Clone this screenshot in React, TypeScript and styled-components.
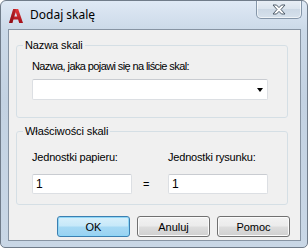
import React from 'react';
import styled, { createGlobalStyle } from 'styled-components';

const GlobalStyle = createGlobalStyle`
  html, body {
    margin: 0;
    padding: 0;
    background: #ffffff;
  }
`;

const Window = styled.div`
  width: 308px;
  height: 248px;
  box-sizing: border-box;
  border: 1px solid #707c8a;
  border-radius: 6px 6px 5px 5px;
  background: linear-gradient(180deg, #dfe9f5 0%, #cbd9e8 12%, #c3d2e2 40%, #c9d7e6 100%);
  display: flex;
  flex-direction: column;
  overflow: hidden;
  font-family: "Liberation Sans", Arial, sans-serif;
`;

const TitleBar = styled.div`
  height: 28px;
  display: flex;
  align-items: flex-start;
`;

const AppIcon = styled.svg`
  width: 16px;
  height: 16px;
  margin: 7px 0 0 7px;
`;

const Title = styled.div`
  margin: 6px 0 0 6px;
  font-family: "Noto Sans", "Open Sans", sans-serif;
  font-size: 12px;
  line-height: 16px;
  color: #000;
`;

const CloseButton = styled.div`
  margin-left: auto;
  margin-right: 5px;
  margin-top: -1px;
  width: 46px;
  height: 19px;
  box-sizing: border-box;
  border: 1px solid #8596a9;
  border-top: none;
  border-radius: 0 0 5px 5px;
  background: linear-gradient(180deg, #e9eff6 0%, #dbe4ee 50%, #ccd8e5 51%, #d6e1ec 100%);
  box-shadow: inset 0 0 0 1px rgba(255, 255, 255, 0.6);
  display: flex;
  align-items: center;
  justify-content: center;
`;

const Client = styled.div`
  flex: 1;
  margin: 0 6px 6px 7px;
  border: 1px solid #8794a3;
  background: #f0f0f0;
  display: flex;
  flex-direction: column;
  padding: 0 0 0 7px;
  font-size: 11px;
  color: #000;
`;

const Group = styled.fieldset<{ top: number; padTop: number; padBottom: number }>`
  margin: ${p => p.top}px 0 0 0;
  width: 272px;
  box-sizing: border-box;
  border: 1px solid #d5dfe5;
  border-radius: 3px;
  padding: ${p => p.padTop}px 0 ${p => p.padBottom}px 15px;
  min-inline-size: 0;
`;

const Legend = styled.legend`
  margin-left: -9px;
  padding: 0 2px;
  line-height: 13px;
  font-size: 11px;
  letter-spacing: -0.1px;
  color: #000;
`;

const Label = styled.div<{ tight?: boolean }>`
  line-height: 13px;
  height: 13px;
  white-space: nowrap;
  letter-spacing: ${p => (p.tight ? '-0.6px' : '-0.2px')};
`;

const Combo = styled.div`
  margin-top: 6px;
  width: 236px;
  height: 21px;
  box-sizing: border-box;
  border: 1px solid #dcdfe3;
  border-top-color: #c9ccd1;
  border-radius: 2px;
  background: #ffffff;
  display: flex;
  align-items: center;
  justify-content: flex-end;
  padding-right: 4px;
`;

const Arrow = styled.div`
  width: 0;
  height: 0;
  border-left: 3.5px solid transparent;
  border-right: 3.5px solid transparent;
  border-top: 4px solid #000;
`;

const UnitsGrid = styled.div`
  display: grid;
  grid-template-columns: 100px 36px 100px;
  grid-template-rows: 13px 20px;
  row-gap: 10px;
  align-items: center;
`;

const TextBox = styled.div`
  height: 20px;
  box-sizing: border-box;
  border: 1px solid #dcdfe3;
  border-top-color: #c9ccd1;
  border-radius: 2px;
  background: #ffffff;
  padding: 0 0 0 3px;
  line-height: 18px;
  font-size: 12px;
`;

const Equals = styled.div`
  padding-left: 11px;
  font-size: 11px;
  line-height: 18px;
`;

const ButtonRow = styled.div`
  margin-top: 11px;
  display: flex;
  justify-content: flex-end;
  gap: 7px;
  padding-right: 10px;
`;

const Button = styled.div<{ primary?: boolean }>`
  width: 73px;
  height: 21px;
  box-sizing: border-box;
  border-radius: 3px;
  display: flex;
  align-items: center;
  justify-content: center;
  font-size: 11px;
  color: #000;
  ${p => p.primary ? `
    border: 1px solid #3c7fb1;
    background: linear-gradient(180deg, #d8f0fb 0%, #c6e8f9 48%, #a6d9f4 52%, #98d2f2 100%);
    box-shadow: inset 0 0 0 1px #8fd7f7;
  ` : `
    border: 1px solid #707070;
    background: linear-gradient(180deg, #f2f2f2 0%, #ebebeb 48%, #dddddd 52%, #cfcfcf 100%);
    box-shadow: inset 0 0 0 1px #fbfbfb;
  `}
`;

const App: React.FC = () => {
  return (
    <>
      <GlobalStyle />
      <Window>
        <TitleBar>
          <AppIcon viewBox="0 0 16 16">
            <defs>
              <linearGradient id="ag" x1="0" y1="0" x2="0" y2="1">
                <stop offset="0" stopColor="#e5383b" />
                <stop offset="1" stopColor="#a3101a" />
              </linearGradient>
            </defs>
            <path d="M5.2 1 L10.2 1 L15 15 L11.2 15 L10.1 11.6 L5.4 11.6 L4.4 15 L1 15 Z M6.3 8.6 L9.2 8.6 L7.8 4.3 Z" fill="url(#ag)" fillRule="evenodd" />
            <path d="M5.2 1 L7.8 1 L4.4 15 L1 15 Z" fill="#7d0c14" opacity="0.45" />
          </AppIcon>
          <Title>Dodaj skalę</Title>
          <CloseButton>
            <svg width="14" height="11" viewBox="0 0 14 11">
              <path d="M1 1 L4.5 1 L7 3.6 L9.5 1 L13 1 L9 5.5 L13 10 L9.5 10 L7 7.4 L4.5 10 L1 10 L5 5.5 Z" fill="#ffffff" stroke="#4d5a68" strokeWidth="1" strokeLinejoin="round" />
            </svg>
          </CloseButton>
        </TitleBar>
        <Client>
          <Group top={9} padTop={8} padBottom={17}>
            <Legend>Nazwa skali</Legend>
            <Label tight>Nazwa, jaka pojawi się na liście skal:</Label>
            <Combo>
              <Arrow />
            </Combo>
          </Group>
          <Group top={7} padTop={13} padBottom={10}>
            <Legend>Właściwości skali</Legend>
            <UnitsGrid>
              <Label>Jednostki papieru:</Label>
              <div />
              <Label>Jednostki rysunku:</Label>
              <TextBox>1</TextBox>
              <Equals>=</Equals>
              <TextBox>1</TextBox>
            </UnitsGrid>
          </Group>
          <ButtonRow>
            <Button primary>OK</Button>
            <Button>Anuluj</Button>
            <Button>Pomoc</Button>
          </ButtonRow>
        </Client>
      </Window>
    </>
  );
};

export default App;
